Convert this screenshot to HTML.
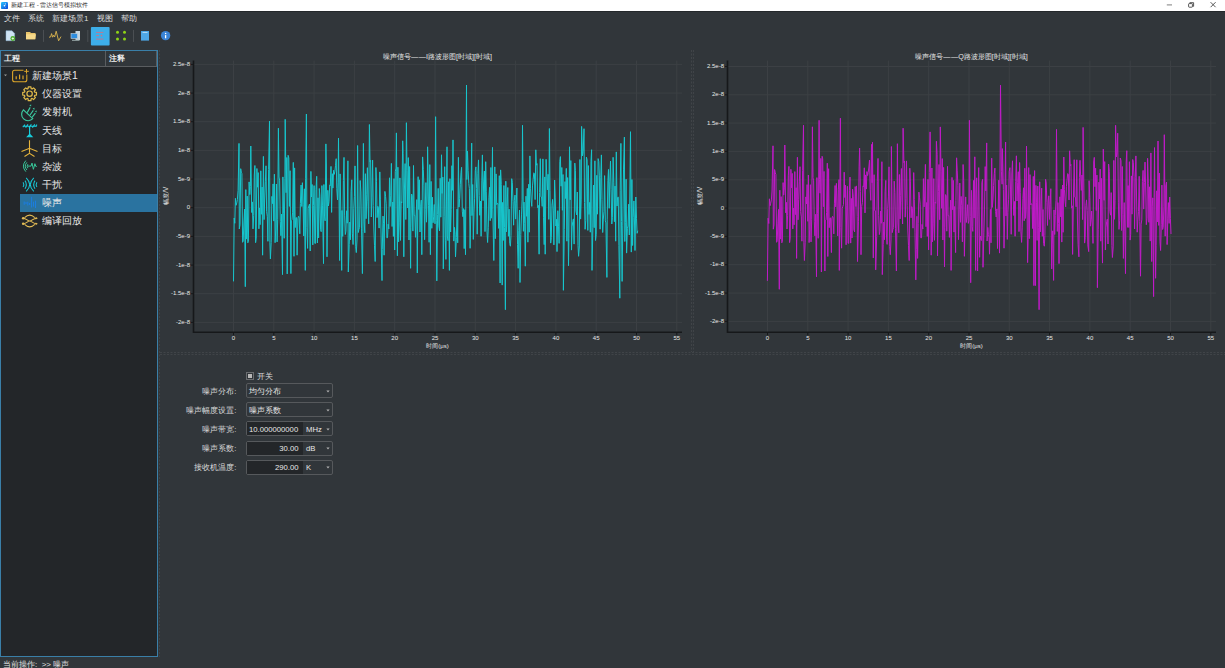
<!DOCTYPE html>
<html><head><meta charset="utf-8">
<style>
*{box-sizing:border-box;margin:0;padding:0}
html,body{width:1225px;height:668px;overflow:hidden;background:#31363a;font-family:"Liberation Sans",sans-serif;color:#e0e0e0}
.a{position:absolute}
#title{left:0;top:0;width:1225px;height:11px;background:#fff}
#title .t{left:11px;top:0.3px;font-size:6.2px;line-height:9px;color:#222;white-space:nowrap}
#tline{left:0;top:11px;width:1225px;height:1px;background:#24282b}
.menu{top:13px;font-size:8px;line-height:12px;color:#dcdcdc;white-space:nowrap}
.sep{top:30px;width:1px;height:12px;background:#4b4f53}
#panel{left:0;top:50px;width:158px;height:607px;border:1px solid #3a7fa8;background:#232629}
#hdr{left:0;top:0;width:156px;height:16px;background:#31363a;border-bottom:1px solid #5a5d60;border-right:1px solid #5a5d60}
#hdr .c{top:0;font-size:7.5px;line-height:16px;color:#f0f0f0;font-weight:bold}
.row{left:0;width:156px;height:18px;font-size:10.4px;line-height:18px;color:#e8e8e8;white-space:nowrap}
.row .tx{left:41px;top:-0.8px}
.sel{background:#2a73a0}
.dotv{width:0;border-left:1px dashed #55595d}
.doth{height:0;border-top:1px dashed #55595d}
.lbl{font-size:7.7px;line-height:15.5px;color:#dadada;text-align:right;white-space:nowrap}
.combo{left:246px;width:87px;height:15px;border:1px solid #56595c;border-radius:2px;background:#31363a}
.combo .tx{left:2.2px;top:0.7px;font-size:7.6px;line-height:14.5px;color:#e8e8e8;white-space:nowrap}
.arr{right:1.6px;top:5.6px;width:4px;height:3px}
.spin .fld{left:0;top:0;width:56px;height:13px;background:#232629}
.spin .num{right:4.5px;top:0.5px;font-size:7.7px;line-height:14.5px;color:#e8e8e8;text-align:right;white-space:nowrap}
.spin .unit{left:59px;top:0.5px;font-size:7.7px;line-height:14.5px;color:#e8e8e8}
#status{left:3px;top:658.5px;font-size:8px;line-height:11px;color:#e0e0e0;white-space:nowrap}
svg text{font-family:"Liberation Sans",sans-serif}
</style></head>
<body>
<div id="title" class="a">
  <svg class="a" style="left:1.2px;top:1.7px" width="7" height="7.2" viewBox="0 0 7 7.2"><defs><linearGradient id="tg" x1="0" y1="0" x2="1" y2="1"><stop offset="0" stop-color="#22c8ff"/><stop offset="1" stop-color="#0a3fd8"/></linearGradient></defs><rect x="0" y="0" width="7" height="7.2" rx="1.3" fill="url(#tg)"/><circle cx="4.3" cy="1.9" r="0.6" fill="#fff" opacity="0.9"/><ellipse cx="3.5" cy="3.7" rx="0.9" ry="0.7" fill="#fff"/><circle cx="2.3" cy="1.8" r="0.4" fill="#fff" opacity="0.5"/><circle cx="4.4" cy="5.6" r="0.4" fill="#fff" opacity="0.6"/></svg>
  <div class="a t">新建工程 - 雷达信号模拟软件</div>
  <svg class="a" style="left:1160px;top:0" width="65" height="11">
    <path d="M6.8 4.9h5.2" stroke="#8a8a8a" stroke-width="1.1"/>
    <rect x="28.6" y="3.6" width="3.8" height="3.6" rx="0.6" stroke="#444" stroke-width="0.9" fill="none"/>
    <path d="M29.8 3.3v-.6h3.8v3.6h-.9" stroke="#444" stroke-width="0.9" fill="none"/>
    <path d="M50.6 2.2l5 5M55.6 2.2l-5 5" stroke="#444" stroke-width="0.9"/>
  </svg>
</div>
<div id="tline" class="a"></div>
<div class="a menu" style="left:4px">文件</div>
<div class="a menu" style="left:28px">系统</div>
<div class="a menu" style="left:52px">新建场景1</div>
<div class="a menu" style="left:97px">视图</div>
<div class="a menu" style="left:121px">帮助</div>

<!-- toolbar -->
<svg class="a" style="left:0;top:22px" width="180" height="28" viewBox="0 0 180 28">
  <!-- new file -->
  <path d="M6 8.8h6l2.6 2.6v7.3H6z" fill="#cfe3f3" stroke="#8fb6d6" stroke-width="0.5"/>
  <circle cx="12.8" cy="16.5" r="2.4" fill="#4fb22c"/><path d="M11.6 16.5h2.4M12.8 15.3v2.4" stroke="#fff" stroke-width="0.7"/>
  <!-- folder -->
  <path d="M26 10h4l1 1h4.5v6.3H26z" fill="#e9c46a"/><path d="M26 12.2h10l-1 5.1H26z" fill="#f6d98a"/>
  <!-- waveform -->
  <polyline points="49,15.2 50.6,15 51.6,11.6 52.6,15.2 53.6,13.2 54.6,15 56.2,9.2 58.6,18.8 61,14.6" stroke="#dcb54f" stroke-width="0.9" fill="none" stroke-linejoin="round"/>
  <!-- computer -->
  <rect x="75.5" y="9" width="4.5" height="9" fill="#c8d4dd"/><rect x="71" y="11.5" width="6.5" height="5" fill="#2f8ee0" stroke="#c8d4dd" stroke-width="0.6"/><rect x="72" y="17.8" width="7.5" height="1" fill="#9aa"/>
  <rect x="43" y="7.9" width="1" height="12" fill="#4b4f53"/>
  <rect x="87.3" y="7.9" width="1" height="12" fill="#4b4f53"/>
  <!-- active button -->
  <rect x="90.9" y="5" width="18.7" height="18.4" rx="1" fill="#3daee9"/>
  <path d="M96 10.4h7.4M96 13.6h3M96 17.1h7.4" stroke="#e06b78" stroke-width="0.8"/><circle cx="101.5" cy="13.6" r="0.8" fill="#e06b78"/>
  <!-- green dots -->
  <g fill="#8fd416"><circle cx="117.5" cy="10.3" r="1.5"/><circle cx="124.5" cy="10.3" r="1.5"/><circle cx="117.5" cy="16.9" r="1.5"/><circle cx="124.5" cy="16.9" r="1.5"/></g>
  <rect x="133" y="7.9" width="1" height="12" fill="#4b4f53"/>
  <!-- blue square -->
  <rect x="141" y="9" width="8" height="9.6" fill="#4ea7e6"/><rect x="142.5" y="10.3" width="5" height="0.7" fill="#d7ecfb"/>
  <!-- info -->
  <circle cx="165.6" cy="13.6" r="4.7" fill="#3a84d6"/><path d="M165.6 13.1v3.2" stroke="#fff" stroke-width="1.3"/><circle cx="165.6" cy="11.4" r="0.75" fill="#fff"/>
</svg>

<!-- left panel -->
<div id="panel" class="a">
  <div id="hdr" class="a">
    <div class="a c" style="left:3px">工程</div>
    <div class="a" style="left:104px;top:0;width:1px;height:16px;background:#5a5d60"></div>
    <div class="a c" style="left:108px">注释</div>
  </div>
  <div class="a row sel" style="top:142.8px;left:19px;width:137px;height:18.3px"></div>
  <div class="a row" style="top:17.10px"><div class="a tx" style="left:31px">新建场景1</div></div>
  <div class="a row" style="top:35.18px"><div class="a tx">仪器设置</div></div>
  <div class="a row" style="top:53.26px"><div class="a tx">发射机</div></div>
  <div class="a row" style="top:71.34px"><div class="a tx">天线</div></div>
  <div class="a row" style="top:89.42px"><div class="a tx">目标</div></div>
  <div class="a row" style="top:107.50px"><div class="a tx">杂波</div></div>
  <div class="a row" style="top:125.58px"><div class="a tx">干扰</div></div>
  <div class="a row" style="top:143.66px"><div class="a tx">噪声</div></div>
  <div class="a row" style="top:161.74px"><div class="a tx">编译回放</div></div>
</div>
<svg class="a" style="left:0;top:0" width="160" height="240" viewBox="0 0 160 240">
  <path d="M4 74.6h3l-1.5 1.7z" fill="#9a9a9a"/>
  <g fill="none" stroke="#dba52a" stroke-width="1.1">
    <path d="M23.5 70.2H14.6a2 2 0 0 0-2 2v7.6a2 2 0 0 0 2 2h10.2a2 2 0 0 0 2-2V74.5"/>
    <path d="M16.2 79.2v-3M19.6 79.2v-4.6M23 79.2v-3.6" stroke-width="1.2"/>
    <path d="M26.5 69v4.6M24.2 71.3h4.6" stroke-width="1"/>
  </g>
  <g fill="none" stroke="#e2bb4a" stroke-width="1.2" stroke-linejoin="round"><circle cx="29.6" cy="93.7" r="2.7"/><path d="M27.61 88.79 L28.05 88.63 L28.26 86.83 L30.94 86.83 L31.15 88.63 L31.59 88.79 L31.67 88.82 L32.09 89.02 L33.51 87.90 L35.40 89.79 L34.28 91.21 L34.48 91.63 L34.51 91.71 L34.67 92.15 L36.47 92.36 L36.47 95.04 L34.67 95.25 L34.51 95.69 L34.48 95.77 L34.28 96.19 L35.40 97.61 L33.51 99.50 L32.09 98.38 L31.67 98.58 L31.59 98.61 L31.15 98.77 L30.94 100.57 L28.26 100.57 L28.05 98.77 L27.61 98.61 L27.53 98.58 L27.11 98.38 L25.69 99.50 L23.80 97.61 L24.92 96.19 L24.72 95.77 L24.69 95.69 L24.53 95.25 L22.73 95.04 L22.73 92.36 L24.53 92.15 L24.69 91.71 L24.72 91.63 L24.92 91.21 L23.80 89.79 L25.69 87.90 L27.11 89.02 L27.53 88.82Z"/></g>
  <g fill="none" stroke="#3cc9a0" stroke-width="1.15">
    <path d="M23.4 109.8a6.4 6.4 0 0 0 9.4 8.9z"/>
    <path d="M27.2 112.6l3-5.2M30 115l3.3-4.6M32 117.3l3.4-4.2"/>
  </g>
  <g fill="#3cc9a0"><path d="M29.3 105.3l1.9-.9-.1 2.2z"/><path d="M32.6 108.6l1.9-.9-.1 2.2z"/><path d="M34.8 111.3l1.9-.9-.1 2.2z"/></g>
  <g fill="none" stroke="#18cfdf" stroke-width="1.05">
    <path d="M22.8 127.2l2.2-2.6M22.8 126.2h14M25.6 127.6l2.4-3.2M29 127.6l2.4-3.2M32.4 127.6l2.4-3.2M35.4 126.6l1.6-2"/>
    <path d="M29.6 126.2v9" stroke-width="1.2"/>
    <path d="M27.3 136.8h4.8l-2.4-2.6z" fill="#18cfdf"/>
  </g>
  <g fill="none" stroke="#e6b43c" stroke-width="1.1">
    <path d="M29.5 140.2v12.6M21.5 151.5l8-3.2 8 3.2M24.5 156.5l5-3.2 5 3.2"/>
  </g>
  <g fill="none" stroke="#38c89a" stroke-width="1">
    <path d="M25.8 160.6Q21 166.2 25.8 171.6M26.9 162.4Q23.6 166.2 26.9 170M27.9 164.2Q26.3 166.2 27.9 168.2"/>
    <path d="M28 166.1h3l1 -3 1.4 6.2 1.5-5.6 .9 2.7h1"/>
  </g>
  <g fill="none" stroke="#18c7d6" stroke-width="1.05">
    <path d="M23.1 182.2Q24.5 184.6 23.1 187M25 180.6Q27.6 184.6 25 188.8M26.2 177.8Q33.2 184.6 26.2 191.4M33.8 177.8Q26.8 184.6 33.8 191.4M35 180.6Q32.4 184.6 35 188.8M36.9 182.2Q35.5 184.6 36.9 187"/>
  </g>
  <g stroke="#1a7ee8" stroke-width="0.9">
    <path d="M24.2 201.5v3.3M26 202v2M27.8 201.7v3.8M29.6 203v2M31.6 196.8v10.7M33.5 201.7v4.9M35.5 200.7v7.3"/>
  </g>
  <g fill="none" stroke="#e2bb55" stroke-width="1.1">
    <path d="M23 218.2C26.5 218.2 27.5 221 29.7 221S33 223.8 36.6 223.8M23 223.8C26.5 223.8 27.5 221 29.7 221S33 218.2 36.6 218.2"/>
    <path d="M24.6 217.6Q29.7 212.6 34.8 217.6M24.6 224.4Q29.7 229.4 34.8 224.4"/>
  </g>
  <g fill="#e2bb55"><circle cx="23.2" cy="218.2" r="1.3"/><circle cx="23.2" cy="223.8" r="1.3"/><path d="M35.6 216.8l2.2 1.4-2.2 1.4z"/><path d="M35.6 222.4l2.2 1.4-2.2 1.4z"/></g>
</svg>
<svg class="a" style="left:0;top:0" width="1225" height="668">
<g stroke="#404448" stroke-width="1" stroke-dasharray="2 1.5" fill="none">
<path d="M159.5 50V657M691.5 50V352M693.5 50V352M160 352.5H1225M160 354.5H1225"/>
</g></svg>
<!-- charts -->
<svg class="a" style="left:0;top:0" width="1225" height="668">
<path d="M233.5 60.6V332.2M273.8 60.6V332.2M314.1 60.6V332.2M354.4 60.6V332.2M394.7 60.6V332.2M435.0 60.6V332.2M475.3 60.6V332.2M515.6 60.6V332.2M555.9 60.6V332.2M596.2 60.6V332.2M636.5 60.6V332.2M676.8 60.6V332.2M193.5 64.4H682.0M193.5 93.1H682.0M193.5 121.7H682.0M193.5 150.4H682.0M193.5 179.1H682.0M193.5 207.7H682.0M193.5 236.4H682.0M193.5 265.1H682.0M193.5 293.7H682.0M193.5 322.4H682.0" stroke="#3c4044" stroke-width="1" fill="none"/><polyline fill="none" stroke="#17c6cd" stroke-width="1.0" stroke-linejoin="miter" stroke-miterlimit="2" points="233.5,281.4 234.2,218.0 234.8,223.3 235.4,198.3 236.1,205.3 236.8,202.9 237.4,199.4 238.1,190.4 239.0,143.4 239.3,229.0 240.0,224.8 240.7,168.7 241.3,172.2 241.9,173.7 242.6,242.3 243.2,241.0 243.9,223.0 244.6,209.1 245.3,286.7 245.8,189.6 246.5,239.1 247.2,196.1 247.8,242.8 248.4,241.4 249.1,181.9 249.8,194.6 250.4,186.5 250.8,146.0 251.7,212.5 252.3,201.9 253.0,228.9 253.7,215.5 254.3,175.0 254.9,165.5 255.6,242.7 256.2,238.1 256.9,168.5 257.6,187.2 258.2,172.6 258.9,228.8 259.5,207.9 260.1,224.7 260.8,170.8 261.4,214.3 262.1,187.1 262.6,255.2 263.4,156.4 264.1,219.6 264.7,199.0 265.4,181.2 266.0,165.8 266.6,211.3 267.3,216.6 267.9,241.3 268.6,169.5 269.5,121.0 269.9,242.8 270.4,258.9 271.2,242.3 271.9,196.4 272.5,203.6 273.1,183.9 273.8,221.1 274.4,174.2 275.1,242.7 275.8,229.0 276.4,184.0 277.1,241.9 277.7,219.5 278.4,128.2 279.0,177.0 279.6,180.1 280.3,221.6 280.9,235.7 281.6,214.1 282.5,274.6 282.9,176.9 283.6,213.2 284.2,238.3 284.9,178.6 285.2,119.3 286.1,192.7 286.8,157.5 287.2,273.9 288.1,155.3 288.8,158.0 289.4,206.4 290.1,170.7 290.9,273.6 291.4,220.6 292.0,219.7 292.6,212.2 293.3,162.4 294.0,256.3 294.6,167.9 295.2,227.6 295.9,217.6 296.6,217.7 297.1,255.2 297.9,218.6 298.5,216.2 299.1,217.3 299.8,233.8 300.4,203.5 301.1,185.0 301.8,206.5 302.4,182.7 303.1,204.8 303.7,235.9 304.4,188.8 305.3,270.4 305.6,178.8 306.4,114.0 306.9,227.3 307.6,248.4 308.2,208.3 308.9,205.9 309.5,204.0 310.2,251.0 310.9,171.4 311.5,197.0 312.1,184.5 312.8,244.9 313.4,205.4 314.1,185.6 314.8,243.3 315.4,243.5 316.0,189.7 316.7,176.3 317.4,243.0 318.0,197.8 318.6,237.9 319.3,188.5 319.9,196.3 320.6,229.7 321.2,231.7 321.9,185.6 322.5,205.9 323.5,263.6 323.9,184.5 324.5,216.1 325.1,220.8 325.9,143.9 326.4,165.0 327.0,256.8 327.8,190.3 328.4,206.0 329.0,201.8 329.7,184.9 330.3,185.7 331.0,166.4 331.6,212.4 332.3,173.7 332.9,188.1 333.6,170.3 334.2,174.4 334.9,171.3 335.5,165.7 336.2,158.7 336.8,188.7 337.5,199.9 338.1,182.2 338.5,138.1 339.6,260.5 340.1,173.9 340.8,210.2 341.7,270.4 342.0,210.5 342.7,236.4 343.4,180.6 344.0,157.4 344.6,215.1 345.3,234.5 345.9,231.2 346.6,210.8 347.2,223.2 347.9,160.8 348.3,272.0 349.2,244.7 349.9,222.0 350.5,239.7 351.1,191.2 351.8,179.8 352.4,233.9 353.1,244.5 353.8,208.2 354.4,196.4 355.0,165.9 355.7,246.8 356.3,252.6 357.0,239.9 357.6,145.5 358.3,232.5 358.9,229.3 359.6,227.4 360.2,180.5 360.9,192.0 361.5,228.1 362.4,273.6 362.9,231.8 363.4,143.4 364.1,221.9 364.8,232.8 365.4,173.7 366.1,218.7 366.8,194.8 367.4,167.7 368.0,201.8 368.7,223.9 369.4,124.5 370.0,161.7 370.6,160.3 371.3,217.0 371.9,197.9 372.6,160.1 373.2,205.4 373.9,230.0 374.5,245.7 375.2,261.5 375.9,167.5 376.5,181.3 377.1,217.6 377.8,206.3 378.4,208.0 379.1,228.1 379.8,171.9 380.4,199.1 381.0,232.0 382.0,280.6 382.3,249.4 383.0,216.1 383.6,223.8 384.1,255.2 384.9,191.4 385.6,196.6 386.2,203.8 386.9,237.9 387.5,237.7 388.2,224.2 388.8,228.9 389.5,177.8 390.1,206.5 390.8,195.4 391.4,163.4 392.1,226.5 392.8,202.0 393.4,236.4 394.0,178.6 394.7,250.0 395.3,171.7 396.0,168.1 396.4,132.9 397.4,255.8 397.9,167.2 398.6,241.8 399.2,222.9 399.9,177.9 400.5,240.4 401.2,201.7 401.8,202.9 402.7,140.8 403.1,153.7 403.8,256.8 404.4,191.0 405.1,163.6 405.8,219.5 406.4,122.7 407.0,170.5 407.7,208.0 408.3,157.6 409.0,240.0 409.6,166.5 410.6,268.3 410.9,227.2 411.6,194.0 412.2,195.5 412.9,231.1 413.5,165.5 414.2,215.5 414.8,215.3 415.5,237.3 416.1,215.1 416.8,199.6 417.3,273.0 418.1,176.7 418.8,209.5 419.4,179.8 420.0,232.0 420.7,206.1 421.3,200.1 421.8,254.7 422.6,156.9 423.3,169.5 423.9,185.1 424.6,239.7 425.2,209.6 425.9,182.6 426.5,222.2 427.2,196.0 427.6,146.8 428.5,205.8 429.1,242.3 429.8,164.6 430.4,254.7 431.1,181.4 431.8,228.3 432.4,197.2 433.0,222.8 433.7,216.8 434.3,204.5 435.0,223.8 435.6,116.7 436.3,220.8 436.8,280.9 437.6,214.6 438.2,188.4 438.9,225.9 439.5,230.9 440.2,178.3 440.8,217.2 441.5,154.8 442.1,193.4 442.8,177.1 443.3,268.9 444.1,216.7 444.7,166.7 445.4,240.8 445.9,259.4 447.0,146.8 447.3,236.0 448.0,240.6 448.6,181.8 449.4,270.4 449.9,178.7 450.6,232.0 451.2,209.6 451.9,165.7 452.5,190.3 453.0,139.9 453.8,241.1 454.5,227.3 455.1,234.3 455.5,256.8 456.4,237.6 457.1,209.1 457.7,242.8 458.4,157.3 459.0,207.1 459.7,198.5 460.3,184.8 461.0,172.8 461.6,167.3 462.3,211.2 462.9,216.7 463.6,208.6 464.2,248.6 464.9,209.7 465.5,254.7 466.5,85.0 466.8,179.5 467.5,151.1 468.1,170.5 468.8,183.5 469.4,188.7 470.1,248.3 470.7,216.8 471.7,143.1 472.0,215.6 472.7,184.5 473.3,239.4 474.0,212.1 474.6,198.8 475.3,170.6 475.9,166.9 476.6,188.5 477.2,234.2 477.9,173.3 478.5,159.9 479.2,195.6 479.8,215.3 480.5,201.0 481.1,236.3 481.8,180.9 482.4,154.9 483.1,200.6 483.7,181.9 484.4,171.0 485.0,231.6 485.7,161.7 486.3,191.8 487.0,231.9 487.6,242.5 488.3,227.8 488.9,197.8 489.6,187.3 490.2,220.7 490.9,167.5 491.5,218.2 492.5,147.4 492.8,209.8 493.8,260.5 494.1,239.5 494.8,166.9 495.4,238.6 496.1,173.9 496.7,204.6 497.4,203.4 498.0,203.7 498.7,228.4 499.3,175.7 500.1,283.0 500.6,169.9 501.3,184.4 502.2,285.1 502.6,202.4 503.2,240.5 503.9,185.5 504.5,227.7 505.4,309.7 505.8,181.2 506.5,231.8 507.1,206.6 507.8,187.5 508.4,236.3 509.1,209.2 509.7,243.5 510.4,246.2 511.0,235.2 511.7,178.7 512.3,182.4 513.0,201.8 513.6,225.2 514.3,200.4 515.0,195.1 515.6,219.1 516.2,203.8 516.9,188.0 517.5,244.4 518.2,268.3 518.8,230.6 519.5,210.0 520.0,282.5 520.8,234.4 521.5,214.9 522.1,199.8 522.5,125.3 523.4,231.3 524.0,202.1 524.7,223.2 525.3,266.2 526.0,196.2 526.6,216.3 527.3,188.4 527.9,242.2 528.6,184.3 529.2,232.2 529.9,155.9 530.5,188.8 531.2,200.8 531.8,206.4 532.5,185.9 533.1,179.5 533.8,172.8 534.4,173.5 535.1,199.6 535.8,149.8 536.4,165.2 537.0,163.6 537.7,207.7 538.3,205.4 539.1,254.2 539.6,192.5 540.3,158.7 540.9,196.8 541.6,197.0 542.2,206.4 542.9,158.9 543.5,217.8 544.2,244.6 544.8,176.9 545.2,254.2 546.1,159.3 546.8,176.3 547.4,189.9 548.1,174.3 548.8,219.4 549.4,128.5 550.0,190.3 550.7,243.1 551.3,237.6 552.0,205.1 552.6,199.4 553.3,210.1 553.9,244.9 554.6,180.0 555.2,197.1 555.9,226.0 556.5,219.3 557.0,251.6 557.8,210.7 558.5,226.8 559.1,243.4 559.8,161.3 560.4,156.6 561.1,186.2 561.8,167.5 562.4,210.3 563.0,174.5 563.4,290.3 564.3,229.6 565.0,181.6 565.6,198.5 566.3,168.4 566.9,241.2 567.6,177.6 568.5,265.7 568.9,238.7 569.5,146.8 570.2,199.8 570.8,160.6 571.5,250.1 572.1,226.9 572.8,221.5 573.4,218.9 574.1,244.1 574.8,163.1 575.4,170.4 576.0,211.1 576.7,214.9 577.3,192.0 578.0,245.6 578.6,256.3 579.3,247.0 579.9,159.5 580.6,219.1 581.2,199.9 581.6,126.4 582.5,155.9 583.2,151.5 584.0,128.7 584.5,202.5 585.1,229.3 585.8,220.4 586.4,157.1 587.1,159.7 587.8,230.4 588.4,165.6 589.0,214.4 589.7,202.4 590.3,232.2 591.0,161.2 591.6,149.7 592.0,270.4 592.9,227.5 593.6,185.1 594.2,227.7 594.9,160.8 595.5,240.5 596.2,234.6 596.8,175.3 597.5,214.2 598.1,158.6 598.8,161.4 599.4,175.9 600.1,229.2 600.8,177.2 601.4,154.9 602.0,199.7 602.7,232.5 603.3,219.1 604.0,211.3 604.6,175.6 605.3,220.9 605.9,222.9 606.9,277.4 607.2,219.2 607.9,180.7 608.5,169.4 609.2,208.3 609.8,181.8 610.5,161.1 611.1,189.2 611.8,224.0 612.4,217.7 613.1,157.3 613.8,182.9 614.4,221.7 615.0,186.1 615.7,241.2 616.3,151.9 617.0,206.1 617.6,197.4 618.3,197.1 618.9,245.6 619.8,298.2 620.2,190.2 620.9,143.4 621.5,221.7 622.1,281.4 622.8,225.1 623.5,169.9 624.4,137.1 624.8,241.5 625.4,222.7 626.1,179.2 626.6,253.1 627.4,228.3 628.0,226.0 628.7,204.2 629.3,235.0 630.0,179.3 630.5,131.7 631.3,252.1 631.9,179.5 632.6,245.5 633.2,217.5 633.9,200.9 634.5,223.0 635.0,250.5 635.8,197.0 636.5,218.3 637.1,233.3 637.8,230.7"/><path d="M193.5 60.6V332.2H682.0" stroke="#16181a" stroke-width="1.6" fill="none"/><path d="M233.5 332.2v3M273.8 332.2v3M314.1 332.2v3M354.4 332.2v3M394.7 332.2v3M435.0 332.2v3M475.3 332.2v3M515.6 332.2v3M555.9 332.2v3M596.2 332.2v3M636.5 332.2v3M676.8 332.2v3M193.5 64.4h-3M193.5 93.1h-3M193.5 121.7h-3M193.5 150.4h-3M193.5 179.1h-3M193.5 207.7h-3M193.5 236.4h-3M193.5 265.1h-3M193.5 293.7h-3M193.5 322.4h-3" stroke="#16181a" stroke-width="1"/><g fill="#e6e6e6" font-size="6" text-anchor="middle"><text x="233.5" y="340.0">0</text><text x="273.8" y="340.0">5</text><text x="314.1" y="340.0">10</text><text x="354.4" y="340.0">15</text><text x="394.7" y="340.0">20</text><text x="435.0" y="340.0">25</text><text x="475.3" y="340.0">30</text><text x="515.6" y="340.0">35</text><text x="555.9" y="340.0">40</text><text x="596.2" y="340.0">45</text><text x="636.5" y="340.0">50</text><text x="676.8" y="340.0">55</text></g><g fill="#e6e6e6" font-size="6" text-anchor="end"><text x="190.0" y="65.8">2.5e-8</text><text x="190.0" y="94.5">2e-8</text><text x="190.0" y="123.1">1.5e-8</text><text x="190.0" y="151.8">1e-8</text><text x="190.0" y="180.5">5e-9</text><text x="190.0" y="209.1">0</text><text x="190.0" y="237.8">-5e-9</text><text x="190.0" y="266.5">-1e-8</text><text x="190.0" y="295.1">-1.5e-8</text><text x="190.0" y="323.8">-2e-8</text></g><path d="M767.5 60.6V332.2M807.8 60.6V332.2M848.1 60.6V332.2M888.4 60.6V332.2M928.7 60.6V332.2M969.0 60.6V332.2M1009.3 60.6V332.2M1049.6 60.6V332.2M1089.9 60.6V332.2M1130.2 60.6V332.2M1170.5 60.6V332.2M1210.8 60.6V332.2M727.5 66.5H1216.0M727.5 94.8H1216.0M727.5 123.1H1216.0M727.5 151.4H1216.0M727.5 179.8H1216.0M727.5 208.1H1216.0M727.5 236.4H1216.0M727.5 264.7H1216.0M727.5 293.1H1216.0M727.5 321.4H1216.0" stroke="#3c4044" stroke-width="1" fill="none"/><polyline fill="none" stroke="#c01ac8" stroke-width="1.0" stroke-linejoin="miter" stroke-miterlimit="2" points="767.4,280.9 768.1,218.2 768.8,223.5 769.4,198.8 770.1,205.7 770.7,203.3 771.4,199.9 772.0,191.0 773.0,145.8 773.3,229.2 774.0,224.9 774.6,169.5 775.3,172.9 775.9,174.5 776.6,242.3 777.2,240.9 777.9,223.1 778.5,209.4 779.3,289.3 779.8,190.2 780.5,239.1 781.1,196.6 781.8,242.8 782.4,241.4 783.1,182.6 783.7,195.1 784.4,187.1 784.8,145.0 785.7,212.8 786.3,202.3 787.0,229.0 787.6,215.7 788.3,175.7 788.9,166.4 789.6,242.6 790.2,238.1 790.9,169.3 791.5,187.8 792.2,173.4 792.8,228.9 793.5,208.2 794.1,224.8 794.8,171.6 795.4,214.6 796.1,187.7 796.6,258.4 797.4,157.3 798.0,219.8 798.7,199.5 799.3,181.9 800.0,166.7 800.6,211.6 801.3,216.9 801.9,241.2 802.6,170.3 803.5,125.3 803.9,242.8 804.4,260.5 805.2,242.2 805.8,196.9 806.5,204.0 807.1,184.6 807.8,221.3 808.4,175.0 809.1,242.6 809.7,229.1 810.4,184.7 811.0,241.9 811.7,219.7 812.4,126.8 813.0,177.7 813.6,180.8 814.3,221.8 814.9,235.8 815.6,214.3 816.5,276.7 816.9,177.6 817.5,213.5 818.2,238.3 819.1,120.3 819.5,179.3 820.1,193.2 820.8,158.4 821.4,272.0 822.1,156.3 822.7,158.9 823.4,206.7 824.0,171.4 824.9,271.0 825.3,220.8 826.0,219.9 826.6,212.5 827.3,163.2 827.8,256.5 828.6,168.7 829.2,227.7 829.9,217.9 830.5,217.9 831.4,252.6 831.8,218.8 832.5,216.4 833.1,217.5 833.8,233.9 834.4,203.9 835.1,185.5 835.7,206.8 836.4,183.4 837.0,205.1 837.7,235.9 838.3,189.4 839.0,179.6 839.3,270.4 840.4,118.2 840.9,227.5 841.6,248.2 842.2,208.6 842.9,206.3 843.5,204.4 844.2,172.2 844.8,197.5 845.5,185.2 846.1,244.8 846.8,205.8 847.4,186.3 848.1,243.2 848.7,243.4 849.4,190.3 850.0,177.1 850.7,243.1 851.3,198.4 852.0,238.0 852.6,189.2 853.3,196.9 853.9,229.8 854.6,231.9 855.2,186.6 855.9,206.5 856.5,185.9 857.2,216.7 857.5,261.5 858.5,221.2 859.1,166.9 859.6,148.1 860.4,191.6 861.0,254.7 861.7,206.6 862.4,202.5 863.0,185.9 863.7,186.7 864.3,167.8 865.0,212.9 865.6,174.9 866.3,189.1 866.9,171.6 867.6,175.6 868.2,172.6 868.9,167.0 869.5,160.1 870.2,189.6 870.8,200.3 871.5,144.4 872.1,182.8 872.5,142.3 873.3,257.9 874.1,174.7 874.7,210.5 875.4,210.7 875.7,269.9 876.7,236.4 877.3,181.3 878.0,158.4 878.6,215.4 879.3,234.6 879.9,231.3 880.6,211.1 881.2,223.3 881.9,161.7 882.3,274.6 883.2,244.6 883.8,222.1 884.5,239.7 885.1,191.8 885.8,180.4 886.4,234.0 887.1,244.4 887.7,208.5 888.4,196.9 889.0,166.8 889.7,246.7 890.3,254.7 891.0,239.9 891.4,146.5 892.3,232.6 892.9,229.4 893.6,227.6 894.2,181.2 894.9,192.6 895.5,228.3 896.4,271.0 896.8,231.8 897.4,143.7 898.1,222.1 898.8,232.8 899.4,174.5 900.1,218.9 900.7,195.3 901.4,168.5 902.0,202.2 902.6,224.0 903.1,128.2 903.9,162.6 904.6,161.1 905.2,217.2 905.9,198.3 906.5,160.9 907.2,205.7 907.8,230.0 908.5,245.6 909.2,260.5 909.8,168.2 910.4,181.9 911.1,217.8 911.7,206.6 912.4,208.3 913.0,228.2 913.7,172.6 914.3,199.5 915.0,232.1 915.8,279.9 916.3,249.2 916.9,216.3 917.6,258.4 918.2,223.5 918.9,192.1 919.5,197.2 920.2,204.3 920.8,237.9 921.5,237.8 922.1,224.4 922.8,229.0 923.4,178.6 924.1,206.9 924.7,196.0 925.4,164.4 926.0,226.7 926.7,202.5 927.3,236.4 928.0,179.4 928.6,249.9 929.3,172.5 930.1,131.9 930.6,167.9 931.2,255.2 931.9,168.0 932.5,241.8 933.2,223.1 933.8,178.6 934.5,240.3 935.1,202.1 935.8,203.3 936.4,141.3 937.1,154.7 937.5,255.8 938.4,191.5 939.0,164.5 939.7,219.7 940.3,126.9 941.0,171.3 941.6,208.3 942.3,158.6 942.9,240.0 943.6,167.4 944.5,266.8 944.9,227.4 945.5,194.6 946.2,196.1 946.8,231.2 947.5,166.4 948.1,215.8 948.8,215.6 949.4,237.4 950.1,215.4 950.7,200.1 951.1,270.4 952.0,177.4 952.7,209.8 953.3,180.4 954.0,232.1 954.6,206.5 955.6,252.6 955.9,200.6 956.6,157.8 957.2,170.2 957.9,185.7 958.5,239.6 959.2,209.9 959.8,183.1 960.5,222.3 961.1,196.4 961.8,205.5 962.4,241.8 963.1,164.5 963.7,180.5 964.4,256.3 965.0,228.0 965.7,196.9 966.3,222.5 967.0,216.5 967.6,204.7 968.3,223.4 968.9,220.7 969.4,120.3 970.2,216.4 970.7,282.7 971.5,190.4 972.2,226.6 972.8,231.4 973.5,180.5 974.1,218.1 974.8,156.8 975.7,270.4 976.1,193.9 976.7,177.8 977.6,271.0 978.0,216.9 978.7,167.6 979.6,257.3 980.0,240.8 980.6,236.0 981.3,240.6 981.9,182.4 982.6,179.4 983.0,267.3 983.9,232.1 984.5,209.9 985.2,166.6 985.8,190.9 986.7,142.9 987.1,241.0 987.8,227.4 988.4,234.4 989.1,237.6 989.5,254.2 990.4,209.4 991.0,242.8 991.7,158.2 992.3,207.4 993.0,199.0 993.6,185.5 994.3,173.5 994.9,168.1 995.6,211.5 996.2,217.0 996.9,208.9 997.5,248.5 998.2,210.1 998.8,180.2 999.5,253.1 1000.1,152.1 1000.5,85.2 1001.4,171.3 1002.1,184.2 1002.4,148.6 1003.4,189.3 1004.0,248.2 1004.7,217.0 1005.6,142.0 1006.0,215.9 1006.6,185.1 1007.3,239.4 1007.9,212.4 1008.6,199.2 1009.2,171.4 1009.9,167.7 1010.5,189.1 1011.2,234.3 1011.8,174.0 1012.5,160.8 1013.1,196.1 1013.8,215.5 1014.4,201.4 1015.1,236.3 1015.7,181.5 1016.4,155.8 1017.0,201.0 1017.7,182.5 1018.3,171.7 1019.0,231.6 1019.6,162.5 1020.3,192.3 1020.9,231.9 1021.6,242.4 1022.2,227.9 1022.9,198.3 1023.5,187.8 1024.2,220.8 1024.8,168.2 1025.5,218.4 1026.1,209.8 1026.5,146.2 1027.6,262.6 1028.1,239.4 1028.7,167.6 1029.4,238.6 1030.0,174.6 1030.7,204.9 1031.3,203.8 1032.0,204.1 1032.6,228.5 1033.3,176.4 1033.9,285.6 1034.6,170.6 1035.4,285.6 1035.9,185.4 1036.5,202.8 1037.1,240.4 1037.8,186.1 1038.4,227.8 1039.1,309.7 1039.7,181.8 1040.4,231.8 1041.0,207.0 1041.7,188.1 1042.3,236.3 1043.0,209.5 1043.6,243.5 1044.3,246.2 1044.9,235.3 1045.6,179.3 1046.2,183.0 1046.9,202.2 1047.5,225.4 1048.2,201.0 1048.8,195.8 1049.5,219.4 1050.1,204.3 1050.8,188.7 1051.7,268.9 1052.1,244.3 1052.7,230.8 1053.6,280.4 1054.0,209.9 1054.7,234.5 1055.3,215.3 1056.0,200.3 1056.5,129.4 1057.3,231.4 1057.9,202.6 1058.6,223.5 1059.0,263.6 1059.9,196.8 1060.5,216.7 1061.2,189.1 1061.8,242.1 1062.5,185.1 1063.1,232.3 1063.8,157.0 1064.4,189.5 1065.1,201.2 1065.7,206.8 1066.4,186.6 1067.0,180.2 1067.7,173.6 1068.3,174.3 1069.0,200.0 1069.6,150.8 1070.3,166.0 1070.9,164.4 1071.6,208.1 1072.2,205.8 1072.6,254.4 1073.5,193.0 1074.2,159.7 1074.8,197.2 1075.5,197.4 1076.1,206.8 1076.8,159.8 1077.4,218.0 1078.1,244.6 1078.9,256.8 1079.4,177.7 1080.0,160.3 1080.7,177.0 1081.3,190.4 1082.0,175.0 1082.6,219.6 1083.1,127.4 1083.9,190.8 1084.6,243.1 1085.2,237.6 1085.9,205.4 1086.5,199.9 1087.2,210.5 1087.8,244.8 1088.7,251.6 1089.1,180.7 1089.8,197.5 1090.4,226.2 1091.1,219.6 1091.7,211.0 1092.4,226.9 1093.0,243.4 1093.7,162.0 1094.3,157.4 1095.0,186.7 1095.6,168.2 1096.3,210.5 1096.9,175.1 1097.4,287.7 1098.2,229.7 1098.9,182.2 1099.5,198.9 1100.2,169.2 1100.8,241.2 1101.5,178.4 1102.1,238.8 1102.5,263.1 1103.3,149.1 1104.1,200.3 1104.7,161.6 1105.4,250.0 1106.0,227.1 1106.7,221.7 1107.3,219.2 1108.0,244.0 1108.6,164.1 1109.3,171.3 1109.9,211.5 1110.6,215.2 1111.2,192.6 1111.9,245.5 1112.4,257.5 1113.2,246.9 1113.8,160.4 1114.5,219.3 1115.1,200.3 1115.6,125.3 1116.4,156.9 1117.1,152.6 1117.7,133.2 1118.4,202.9 1119.0,229.4 1119.7,220.6 1120.3,158.0 1121.0,160.6 1121.6,230.5 1122.3,166.5 1122.9,214.7 1123.4,258.4 1124.2,202.6 1124.9,231.9 1125.5,273.6 1126.2,162.0 1126.8,150.7 1127.5,227.3 1128.1,185.6 1128.8,227.5 1129.4,161.7 1130.1,240.1 1130.7,234.3 1131.4,175.9 1132.0,214.2 1132.7,159.5 1133.3,162.3 1134.0,176.5 1134.6,229.0 1135.3,177.8 1135.9,155.9 1136.6,200.0 1137.2,232.2 1137.9,219.1 1138.5,211.4 1139.2,176.3 1139.8,221.6 1140.5,276.2 1141.1,224.2 1141.8,219.9 1142.4,181.6 1143.1,170.4 1143.7,209.1 1144.4,182.6 1145.0,162.1 1145.7,190.0 1146.3,224.7 1147.0,218.3 1147.6,158.3 1148.3,183.7 1148.9,222.3 1149.6,186.8 1150.2,241.1 1150.9,152.9 1151.7,261.5 1152.2,206.5 1152.8,197.8 1153.6,296.6 1154.1,197.6 1154.5,147.6 1155.6,278.3 1156.1,245.5 1156.7,190.8 1157.4,221.9 1158.0,141.0 1158.7,225.4 1159.3,173.1 1160.0,241.9 1160.6,250.5 1161.3,224.8 1161.9,185.1 1162.6,229.5 1163.2,227.4 1163.9,206.9 1164.3,134.7 1165.2,236.2 1165.8,186.0 1166.5,182.1 1167.1,244.6 1167.8,218.2 1168.4,202.6 1169.1,223.4 1169.7,197.0 1170.4,218.5 1171.0,234.0"/><path d="M727.5 60.6V332.2H1216.0" stroke="#16181a" stroke-width="1.6" fill="none"/><path d="M767.5 332.2v3M807.8 332.2v3M848.1 332.2v3M888.4 332.2v3M928.7 332.2v3M969.0 332.2v3M1009.3 332.2v3M1049.6 332.2v3M1089.9 332.2v3M1130.2 332.2v3M1170.5 332.2v3M1210.8 332.2v3M727.5 66.5h-3M727.5 94.8h-3M727.5 123.1h-3M727.5 151.4h-3M727.5 179.8h-3M727.5 208.1h-3M727.5 236.4h-3M727.5 264.7h-3M727.5 293.1h-3M727.5 321.4h-3" stroke="#16181a" stroke-width="1"/><g fill="#e6e6e6" font-size="6" text-anchor="middle"><text x="767.5" y="340.0">0</text><text x="807.8" y="340.0">5</text><text x="848.1" y="340.0">10</text><text x="888.4" y="340.0">15</text><text x="928.7" y="340.0">20</text><text x="969.0" y="340.0">25</text><text x="1009.3" y="340.0">30</text><text x="1049.6" y="340.0">35</text><text x="1089.9" y="340.0">40</text><text x="1130.2" y="340.0">45</text><text x="1170.5" y="340.0">50</text><text x="1210.8" y="340.0">55</text></g><g fill="#e6e6e6" font-size="6" text-anchor="end"><text x="724.0" y="67.9">2.5e-8</text><text x="724.0" y="96.2">2e-8</text><text x="724.0" y="124.5">1.5e-8</text><text x="724.0" y="152.8">1e-8</text><text x="724.0" y="181.2">5e-9</text><text x="724.0" y="209.5">0</text><text x="724.0" y="237.8">-5e-9</text><text x="724.0" y="266.1">-1e-8</text><text x="724.0" y="294.5">-1.5e-8</text><text x="724.0" y="322.8">-2e-8</text></g>
<g fill="#e6e6e6" font-size="7" text-anchor="middle">
<text x="437.5" y="58.5" font-size="7.2">噪声信号—&#8202;—I路波形图[时域][时域]</text>
<text x="971.5" y="58.5" font-size="7.2">噪声信号—&#8202;—Q路波形图[时域][时域]</text>
<text x="437.5" y="348" font-size="6">时间(μs)</text>
<text x="971.5" y="348" font-size="6">时间(μs)</text>
<text transform="translate(168.3 195.8) rotate(-90)" font-size="6.4">幅度/V</text>
<text transform="translate(702.3 195.8) rotate(-90)" font-size="6.4">幅度/V</text>
</g>
</svg>

<!-- form -->
<div class="a" style="left:246px;top:372px;width:8px;height:8px;border:1px solid #6a6d70;background:#31363a"><div class="a" style="left:1px;top:1px;width:4px;height:4px;background:#b8b8b8"></div></div>
<div class="a lbl" style="left:257px;top:368.7px;text-align:left">开关</div>
<div class="a lbl" style="left:140px;width:96.3px;top:383.5px">噪声分布:</div>
<div class="a combo" style="top:383px"><div class="a tx">均匀分布</div><svg class="a arr" width="4" height="3" viewBox="0 0 4 3"><path d="M0.4 0.6h3.2L2 2.4z" fill="#b4b4b4"/></svg></div>
<div class="a lbl" style="left:140px;width:96.3px;top:402.5px">噪声幅度设置:</div>
<div class="a combo" style="top:402px"><div class="a tx">噪声系数</div><svg class="a arr" width="4" height="3" viewBox="0 0 4 3"><path d="M0.4 0.6h3.2L2 2.4z" fill="#b4b4b4"/></svg></div>
<div class="a lbl" style="left:140px;width:96.3px;top:421.5px">噪声带宽:</div>
<div class="a combo spin" style="top:421px"><div class="a fld"><div class="a num" style="left:2px;text-align:left">10.000000000</div></div><div class="a unit">MHz</div><svg class="a arr" width="4" height="3" viewBox="0 0 4 3"><path d="M0.4 0.6h3.2L2 2.4z" fill="#b4b4b4"/></svg></div>
<div class="a lbl" style="left:140px;width:96.3px;top:441px">噪声系数:</div>
<div class="a combo spin" style="top:440.5px"><div class="a fld"><div class="a num">30.00</div></div><div class="a unit">dB</div><svg class="a arr" width="4" height="3" viewBox="0 0 4 3"><path d="M0.4 0.6h3.2L2 2.4z" fill="#b4b4b4"/></svg></div>
<div class="a lbl" style="left:140px;width:96.3px;top:460px">接收机温度:</div>
<div class="a combo spin" style="top:459.5px"><div class="a fld"><div class="a num">290.00</div></div><div class="a unit">K</div><svg class="a arr" width="4" height="3" viewBox="0 0 4 3"><path d="M0.4 0.6h3.2L2 2.4z" fill="#b4b4b4"/></svg></div>

<div id="status" class="a">当前操作:&nbsp; &gt;&gt; 噪声</div>
</body></html>
